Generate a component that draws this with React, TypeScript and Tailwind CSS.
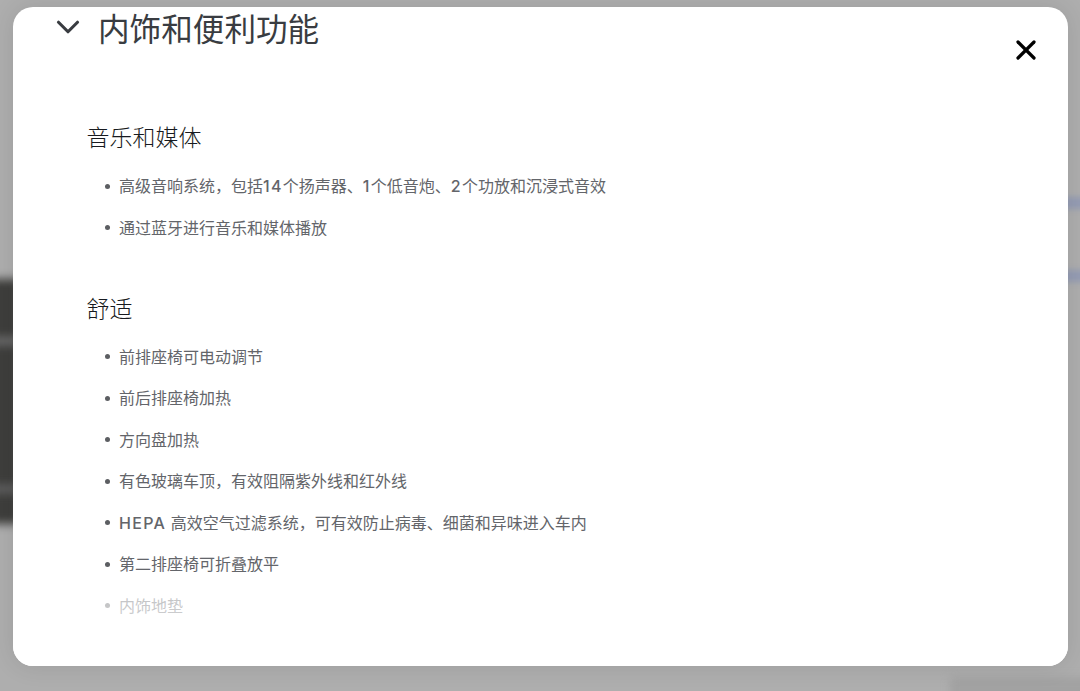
import { ChevronDown, X } from "lucide-react";

const sections = [
  {
    title: "音乐和媒体",
    items: ["高级音响系统，包括14个扬声器、1个低音炮、2个功放和沉浸式音效", "通过蓝牙进行音乐和媒体播放"],
  },
  {
    title: "舒适",
    items: [
      "前排座椅可电动调节",
      "前后排座椅加热",
      "方向盘加热",
      "有色玻璃车顶，有效阻隔紫外线和红外线",
      "HEPA 高效空气过滤系统，可有效防止病毒、细菌和异味进入车内",
      "第二排座椅可折叠放平",
      "内饰地垫",
    ],
  },
];

// latin runs sit a bit wider and heavier than the CJK around them
function ItemText({ text }: { text: string }) {
  return (
    <span>
      {text.split(/([A-Za-z0-9]+)/).map((part, i) =>
        /^[A-Za-z0-9]+$/.test(part) ? (
          <span key={i} className="font-medium tracking-[1.3px]">
            {part}
          </span>
        ) : (
          part
        ),
      )}
    </span>
  );
}

function Backdrop() {
  return (
    <div className="absolute inset-0 overflow-hidden bg-[#aeaeae]">
      <div className="absolute left-[-40px] top-[279px] h-[245px] w-[60px] bg-[#3e3e3c] blur-[5px]" />
      <div className="absolute left-[-10px] top-[336px] h-[10px] w-[30px] bg-[#686868] blur-[4px]" />
      <div className="absolute left-[-10px] top-[484px] h-[10px] w-[30px] bg-[#5e5e5e] blur-[4px]" />
      <div className="absolute right-[-20px] top-[197px] h-[12px] w-[60px] bg-[#949cb4] blur-[3px]" />
      <div className="absolute right-[-20px] top-[270px] h-[12px] w-[60px] bg-[#949cb4] blur-[3px]" />
      <div className="absolute bottom-[-10px] right-[-10px] h-[24px] w-[140px] bg-[#a2a2a2] blur-[4px]" />
    </div>
  );
}

export default function App() {
  return (
    <div className="relative h-[691px] w-[1080px] overflow-hidden font-['Inter','Noto_Sans_CJK_SC',sans-serif]">
      <Backdrop />
      <div className="relative ml-[13px] mt-[7px] h-[659px] w-[1055px] overflow-hidden rounded-[20px] bg-white shadow-[0_0_24px_rgba(0,0,0,0.1)]">
        <button className="absolute right-[26px] top-[27px] text-black">
          <X size={32} strokeWidth={2.4} />
        </button>
        <div className="flex items-start pl-[36px]">
          <ChevronDown size={38} strokeWidth={2} className="mt-[1px] text-[#393c41]" />
          <h2 className="ml-[11px] text-[31.6px] font-normal leading-[46px] text-[#393c41]">内饰和便利功能</h2>
        </div>
        <div className="mt-[67px] flex flex-col gap-[42px] pl-[73.5px]">
          {sections.map((section) => (
            <section key={section.title}>
              <h3 className="text-[23px] font-light leading-[36px] text-[#171a20]">{section.title}</h3>
              <ul className="mt-[9.5px] flex flex-col">
                {section.items.map((item) => (
                  <li key={item} className="flex h-[41.5px] items-center text-[16px] leading-[24px] text-[#63656a]">
                    <span className="ml-[18.5px] mr-[9px] h-[5px] w-[5px] rounded-full bg-[#5c5e62]" />
                    <ItemText text={item} />
                  </li>
                ))}
              </ul>
            </section>
          ))}
        </div>
        <div className="absolute bottom-0 left-0 right-0 h-[91px] bg-[linear-gradient(to_bottom,rgba(255,255,255,0)_12%,rgba(255,255,255,0.62)_25%,rgba(255,255,255,0.68)_45%,#fff_70%)]" />
      </div>
    </div>
  );
}
